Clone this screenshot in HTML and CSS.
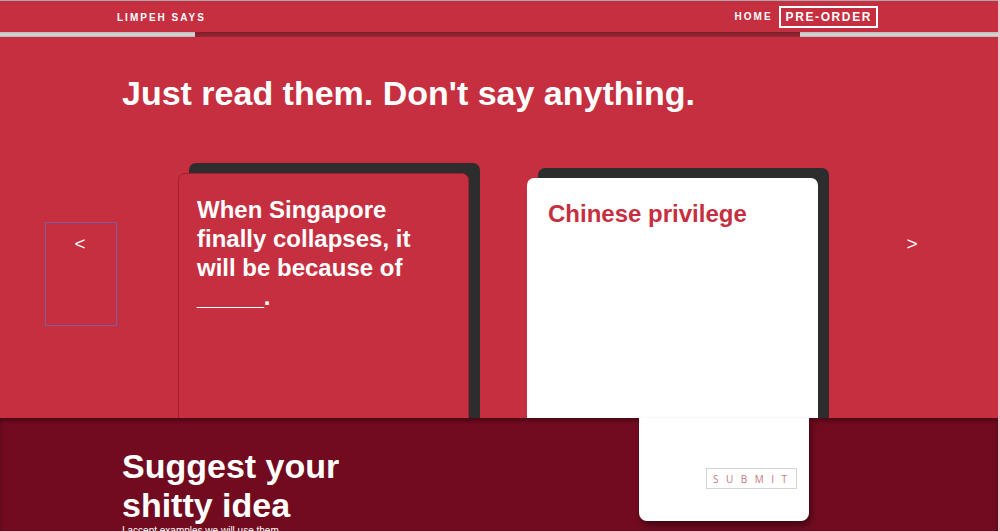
FILE: index.html
```html
<!DOCTYPE html>
<html lang="en">
<head>
  <meta charset="UTF-8">
  <meta name="viewport" content="width=device-width, initial-scale=1.0">
  <title>Limpeh Says</title>
  <link rel="stylesheet" href="styles.css">
</head>
<body>
  <div class="page">
    <header class="topbar">
      <a href="#" class="logo">LIMPEH SAYS</a>
      <nav class="nav">
        <a href="#" class="nav-link">HOME</a>
        <a href="#" class="nav-link nav-boxed">PRE-ORDER</a>
      </nav>
    </header>
    <div class="strip">
      <div class="strip-side"></div>
      <div class="strip-mid"></div>
      <div class="strip-side"></div>
    </div>

    <section class="cards-section">
      <h1>Just read them. Don't say anything.</h1>
      <div class="carousel">
        <button class="arrow arrow-prev">&lt;</button>
        <div class="card card-black">
          <p>When Singapore finally collapses, it will be because of _____.</p>
        </div>
        <div class="card card-white">
          <p>Chinese privilege</p>
        </div>
        <button class="arrow arrow-next">&gt;</button>
      </div>
    </section>

    <section class="suggest-section">
      <div class="suggest-text">
        <h2>Suggest your<br>shitty idea</h2>
        <p class="note">I accept examples we will use them</p>
      </div>
      <form class="suggest-card">
        <button type="submit" class="submit-btn">SUBMIT</button>
      </form>
    </section>
  </div>
</body>
</html>
```

FILE: styles.css
```css
* {
  margin: 0;
  padding: 0;
  box-sizing: border-box;
  font-family: 'Liberation Sans', Arial, sans-serif;
}

body {
  background-color: #ecc4c9;
  height: 532px;
  overflow: hidden;
}

.page {
  width: 998px;
  height: 531px;
  overflow: hidden;
  background-color: #c62f3f;
}

a {
  color: white;
  text-decoration: none;
}

.topbar {
  height: 32px;
  border-top: 1px solid #a9a9a9;
  background-color: #c62f3f;
  display: flex;
  align-items: center;
  justify-content: space-between;
  padding: 0 120px 0 117px;
}

.logo {
  font-size: 10px;
  font-weight: bold;
  letter-spacing: 2px;
  margin-top: 1px;
}

.nav {
  display: flex;
  align-items: center;
  gap: 6px;
}

.nav-link {
  font-size: 10px;
  font-weight: bold;
  letter-spacing: 2px;
}

.nav-boxed {
  font-size: 12px;
  letter-spacing: 1.6px;
  border: 2px solid white;
  padding: 2px 4px 2px 5px;
  line-height: 14px;
}

.strip {
  height: 5px;
  display: flex;
}

.strip-side {
  width: 195px;
  background: linear-gradient(180deg, #bdbdbd, #d9d9d9 60%, #b3b3b3);
}

.strip-side:last-child {
  width: 198px;
}

.strip-mid {
  flex: 1;
  background: linear-gradient(180deg, #7f1d2a, #962634);
}

.cards-section {
  height: 381px;
  overflow: hidden;
}

h1 {
  color: white;
  font-size: 34px;
  line-height: 39px;
  margin: 37px 0 0 122px;
}

.carousel {
  display: flex;
  align-items: flex-start;
  padding-left: 45px;
  margin-top: 50px;
}

.arrow {
  width: 72px;
  height: 104px;
  background: none;
  border: 1px solid #7d5d9c;
  color: white;
  font-size: 19px;
  padding-top: 10px;
  padding-right: 2px;
  display: flex;
  justify-content: center;
  align-items: flex-start;
  margin-top: 59px;
  cursor: pointer;
}

.arrow-prev {
  margin-right: 61px;
}

.arrow-next {
  border-color: transparent;
  margin-left: 59px;
}

.card {
  width: 291px;
  height: 320px;
  border-radius: 7px;
  padding: 21px 19px;
  box-shadow: 11px -10px 0 #2d2d2d;
}

.card p {
  font-size: 24px;
  font-weight: bold;
  line-height: 29px;
}

.card-black {
  background-color: #c62f3f;
  border: 1px solid #a21f2f;
  margin-top: 10px;
  padding: 21px 18px;
  color: white;
}

.card-white {
  background-color: white;
  color: #c62f3f;
  margin-top: 15px;
  margin-left: 58px;
  padding-left: 21px;
}

.suggest-section {
  height: 113px;
  background-color: #720b20;
  box-shadow: inset 0 3px 4px rgba(0, 0, 0, 0.35);
  display: flex;
  align-items: flex-start;
  padding-left: 122px;
}

.suggest-text {
  flex: 1;
  padding-top: 29px;
}

h2 {
  color: white;
  font-size: 34px;
  line-height: 39px;
}

.note {
  color: white;
  font-size: 10px;
  line-height: 12px;
}

.suggest-card {
  width: 170px;
  height: 103px;
  margin-right: 189px;
  background-color: white;
  border-radius: 0 0 8px 8px;
  box-shadow: 2px 4px 6px rgba(0, 0, 0, 0.45);
  display: flex;
  justify-content: flex-end;
  align-items: flex-start;
  padding: 50px 12px 0 0;
}

.submit-btn {
  width: 91px;
  height: 21px;
  background: white;
  border: 1px solid #d4d4d4;
  color: #c7787a;
  font-family: 'Open Sans', sans-serif;
  font-size: 10px;
  letter-spacing: 7.5px;
  padding-left: 6px;
  text-align: left;
  cursor: pointer;
}
```
